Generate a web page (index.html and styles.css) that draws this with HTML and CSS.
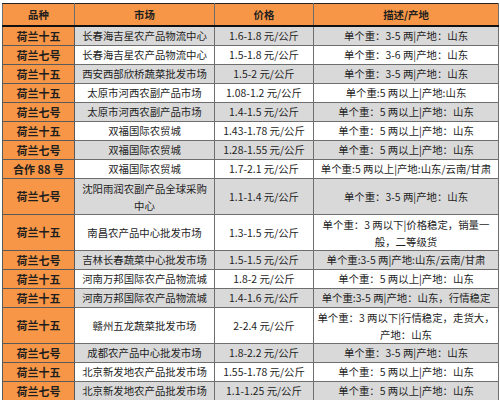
FILE: index.html
```html
<!DOCTYPE html>
<html>
<head>
<meta charset="utf-8">
<link rel="stylesheet" href="styles.css">
</head>
<body>
<table class="grid">
<colgroup><col class="c1"><col class="c2"><col class="c3"><col class="c4"></colgroup>
<thead>
<tr><th>品种</th><th>市场</th><th>价格</th><th>描述/产地</th></tr>
</thead>
<tbody>
<tr class="g"><td class="k">荷兰十五</td><td>长春海吉星农产品物流中心</td><td>1.6-1.8 元/公斤</td><td>单个重：3-5 两|产地：山东</td></tr>
<tr><td class="k">荷兰七号</td><td>长春海吉星农产品物流中心</td><td>1.5-1.8 元/公斤</td><td>单个重：3-6 两|产地：山东</td></tr>
<tr class="g"><td class="k">荷兰十五</td><td>西安西部欣桥蔬菜批发市场</td><td>1.5-2 元/公斤</td><td>单个重：3-5 两|产地：山东</td></tr>
<tr><td class="k">荷兰十五</td><td>太原市河西农副产品市场</td><td>1.08-1.2 元/公斤</td><td>单个重:5 两以上|产地:山东</td></tr>
<tr class="g"><td class="k">荷兰七号</td><td>太原市河西农副产品市场</td><td>1.4-1.5 元/公斤</td><td>单个重：5 两以上|产地：山东</td></tr>
<tr><td class="k">荷兰十五</td><td>双福国际农贸城</td><td>1.43-1.78 元/公斤</td><td>单个重：5 两以上|产地：山东</td></tr>
<tr class="g"><td class="k">荷兰七号</td><td>双福国际农贸城</td><td>1.28-1.55 元/公斤</td><td>单个重：5 两以上|产地：山东</td></tr>
<tr><td class="k">合作 88 号</td><td>双福国际农贸城</td><td>1.7-2.1 元/公斤</td><td>单个重:5 两以上|产地:山东/云南/甘肃</td></tr>
<tr class="g t"><td class="k">荷兰七号</td><td>沈阳雨润农副产品全球采购<br>中心</td><td>1.1-1.4 元/公斤</td><td>单个重：3-5 两|产地：山东</td></tr>
<tr class="t"><td class="k">荷兰十五</td><td>南昌农产品中心批发市场</td><td>1.3-1.5 元/公斤</td><td>单个重：3 两以下|价格稳定，销量一<br>般，二等级货</td></tr>
<tr class="g"><td class="k">荷兰七号</td><td>吉林长春蔬菜中心批发市场</td><td>1.5-1.5 元/公斤</td><td>单个重:3-5 两|产地:山东/云南/甘肃</td></tr>
<tr><td class="k">荷兰十五</td><td>河南万邦国际农产品物流城</td><td>1.8-2 元/公斤</td><td>单个重：5 两以上|产地：山东</td></tr>
<tr class="g"><td class="k">荷兰十五</td><td>河南万邦国际农产品物流城</td><td>1.4-1.6 元/公斤</td><td>单个重:3-5 两|产地：山东，行情稳定</td></tr>
<tr class="t"><td class="k">荷兰十五</td><td>赣州五龙蔬菜批发市场</td><td>2-2.4 元/公斤</td><td>单个重：3 两以下|行情稳定，走货大，<br>产地：山东</td></tr>
<tr class="g"><td class="k">荷兰七号</td><td>成都农产品中心批发市场</td><td>1.8-2.2 元/公斤</td><td>单个重：3-5 两|产地：山东</td></tr>
<tr><td class="k">荷兰十五</td><td>北京新发地农产品批发市场</td><td>1.55-1.78 元/公斤</td><td>单个重：5 两以上|产地：山东</td></tr>
<tr class="g"><td class="k">荷兰七号</td><td>北京新发地农产品批发市场</td><td>1.1-1.25 元/公斤</td><td>单个重：5 两以上|产地：山东</td></tr>
</tbody>
</table>
</body>
</html>
```
FILE: styles.css
```css
html, body {
  margin: 0;
  padding: 0;
  background: #ffffff;
}
body {
  padding: 3px 0 0 2px;
  font-family: "Noto Sans CJK SC", "Noto Sans", sans-serif;
  color: #1e1e1e;
}
.grid {
  border-collapse: collapse;
  table-layout: fixed;
  width: 496px;
  font-size: 10.4px;
}
.c1 { width: 72px; }
.c2 { width: 140px; }
.c3 { width: 99px; }
.c4 { width: 185px; }
.grid th, .grid td {
  padding: 0;
  text-align: center;
  vertical-align: middle;
  white-space: nowrap;
  overflow: hidden;
  border: 1px solid #6e6e6e;
  line-height: 16px;
}
.grid th {
  background: #f79646;
  font-weight: bold;
  height: 21px;
  border-top: 1px solid #222;
  border-bottom: 2px solid #111;
}
.grid td {
  height: 18px;
  background: #ffffff;
}
.grid tr.g td {
  background: #d9d9d9;
}
.grid tr.t td {
  height: 35px;
  line-height: 17px;
}
.grid td.k, .grid tr.g td.k {
  background: #f79646;
  font-weight: bold;
  font-size: 11px;
  border-color: #5a5a5a;
}
```
